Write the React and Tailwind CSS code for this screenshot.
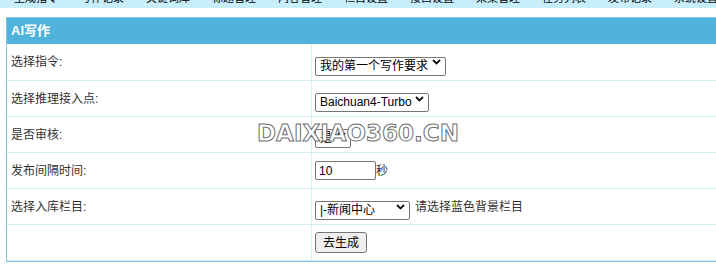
import React from "react";

const navItems = ["生成指令", "写作记录", "关键词库", "标题管理", "内容管理", "栏目设置", "接口设置", "采集管理", "任务列表", "发布记录", "系统设置"];

const Chevron = () => (
  <svg width="9" height="6" viewBox="0 0 9 6" className="absolute right-[5px] top-1/2 -translate-y-1/2 pointer-events-none">
    <path d="M1 1l3.5 3.5L8 1" fill="none" stroke="#111" strokeWidth="1.8" />
  </svg>
);

const Select = ({ value, width }) => (
  <div className={`relative ${width} h-[19px]`}>
    <select
      defaultValue={value}
      className="appearance-none w-full h-full border border-[#767676] rounded-[2px] bg-white pl-[4px] text-[12px] leading-[17px] text-black outline-none"
    >
      <option>{value}</option>
    </select>
    <Chevron />
  </div>
);

const rows = [
  { label: "选择指令:", h: "h-[37px]", content: <Select value="我的第一个写作要求" width="w-[131px]" /> },
  { label: "选择推理接入点:", h: "h-[36px]", content: <Select value="Baichuan4-Turbo" width="w-[114px]" /> },
  { label: "是否审核:", h: "h-[36px]", content: <Select value="是" width="w-[36px]" /> },
  {
    label: "发布间隔时间:",
    h: "h-[36px]",
    content: (
      <div className="flex items-center">
        <input
          defaultValue="10"
          className="w-[61px] h-[19px] border border-[#767676] rounded-[2px] px-[3px] text-[12px] text-black outline-none"
        />
        <span className="text-[12px] text-[#333]">秒</span>
      </div>
    ),
  },
  {
    label: "选择入库栏目:",
    h: "h-[36px]",
    content: (
      <div className="flex items-center gap-[5px]">
        <Select value="|-新闻中心" width="w-[95px]" />
        <span className="text-[12px] text-[#333]">请选择蓝色背景栏目</span>
      </div>
    ),
  },
  {
    label: "",
    h: "h-[36px]",
    content: (
      <button className="h-[21px] px-[7px] border border-[#767676] rounded-[3px] bg-[#efefef] text-[12px] text-black">
        去生成
      </button>
    ),
  },
];

export default function App() {
  return (
    <div className="relative w-[716px] h-[268px] overflow-hidden bg-white font-['Liberation_Sans','Noto_Sans_CJK_SC',sans-serif]">
      {/* cut-off nav strip */}
      <div className="h-[8px] bg-[#c9eefb] overflow-hidden">
        <div className="flex gap-[22px] pl-[14px] mt-[-8px]">
          {navItems.map((t, i) => (
            <span key={i} className="text-[11px] leading-[12px] text-black whitespace-nowrap">
              {t}
            </span>
          ))}
        </div>
      </div>

      <div className="mt-[9px] ml-[6px] w-[730px] border border-[#84c4db] border-b-[#7cc3da]">
        <div className="h-[26px] bg-[#4fb3dc] flex items-center pl-[4px] text-white font-bold text-[13px]">
          AI写作
        </div>
        {rows.map((r, idx) => (
          <div key={idx} className={`grid grid-cols-[305px_1fr] ${r.h} border-b border-[#d5eef5]`}>
            <div className="flex items-center pl-[4px] border-r border-[#d5eef5] text-[12px] text-[#333]">
              {r.label}
            </div>
            <div className="flex items-center pl-[3px]">{r.content}</div>
          </div>
        ))}
      </div>

      {/* watermark */}
      <div className="absolute left-[257px] top-[121px] text-[23px] font-bold tracking-[0px] text-white [-webkit-text-stroke:1px_#707070] font-['DejaVu_Sans',sans-serif] leading-[24px] pointer-events-none">
        DAIXIAO360.CN
      </div>
    </div>
  );
}
